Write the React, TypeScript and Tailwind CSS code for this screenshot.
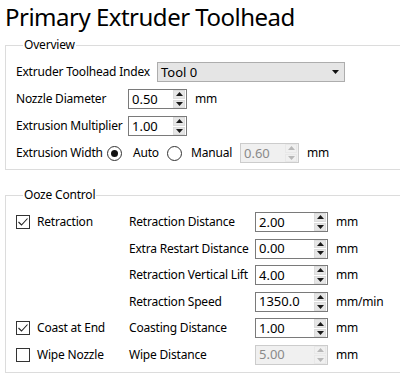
import React from "react";

const font = { fontFamily: '"Noto Sans", "Open Sans", sans-serif' };

function SpinButtons({ disabled }: { disabled?: boolean }) {
  const c = disabled ? "#b8b8b8" : "#1a1a1a";
  return (
    <div className="flex flex-col h-[18px] w-[12px] mr-[1px] gap-[1px]">
      <div className={`flex-1 flex items-center justify-center border ${disabled ? "border-[#e8e8e8] bg-[#f0f0f0]" : "border-[#dcdcdc] bg-[#e6e6e6]"}`}>
        <svg width="7" height="4" viewBox="0 0 7 4"><polygon points="3.5,0 7,4 0,4" fill={c} /></svg>
      </div>
      <div className={`flex-1 flex items-center justify-center border ${disabled ? "border-[#e8e8e8] bg-[#f0f0f0]" : "border-[#dcdcdc] bg-[#e6e6e6]"}`}>
        <svg width="7" height="4" viewBox="0 0 7 4"><polygon points="0,0 7,0 3.5,4" fill={c} /></svg>
      </div>
    </div>
  );
}

function Spin({ value, w, disabled }: { value: string; w: string; disabled?: boolean }) {
  return (
    <div
      className={`${w} h-[20px] flex items-center border ${disabled ? "border-[#cccccc] bg-[#f0f0f0] text-[#8a8a8a]" : "border-[#7a7a7a] bg-white text-black"}`}
    >
      <span className="flex-1 pl-[3px] text-[13px] leading-none tracking-normal">{value}</span>
      <SpinButtons disabled={disabled} />
    </div>
  );
}

function Check({ checked }: { checked?: boolean }) {
  return (
    <div className="w-[14px] h-[14px] border border-[#333333] bg-white flex items-center justify-center">
      {checked && (
        <svg width="12" height="12" viewBox="0 0 12 12">
          <polyline points="1.5,6 4.5,9 10.5,2.5" fill="none" stroke="#222" strokeWidth="1.1" />
        </svg>
      )}
    </div>
  );
}

function Radio({ checked }: { checked?: boolean }) {
  return (
    <div className="w-[15px] h-[15px] rounded-full border border-[#333333] bg-white flex items-center justify-center">
      {checked && <div className="w-[7px] h-[7px] rounded-full bg-[#111]" />}
    </div>
  );
}

function Row({ children }: { children: React.ReactNode }) {
  return <div className="flex items-center h-[20px]">{children}</div>;
}

export default function App() {
  return (
    <div className="w-[400px] h-[391px] bg-white overflow-hidden text-[12px] tracking-[-0.2px] text-black" style={font}>
      <div className="pl-[5px] pt-[2px] h-[37px] text-[24px] leading-[30px] tracking-[-0.5px]">Primary Extruder Toolhead</div>
      <fieldset className="ml-[5px] w-[410px] border border-[#dcdcdc] pl-[10px] pt-[9px] pb-[6px] m-0">
        <legend className="ml-[7px] px-[1px] leading-[16px]">Overview</legend>
        <div className="flex flex-col gap-[7px]">
          <Row>
            <span className="w-[141px]">Extruder Toolhead Index</span>
            <div className="w-[188px] h-[20px] bg-[#e5e5e5] border border-[#adadad] flex items-center pl-[3px] pr-[5px]">
              <span className="flex-1 text-[13px] leading-none tracking-normal">Tool 0</span>
              <svg width="7" height="4" viewBox="0 0 7 4"><polygon points="0,0 7,0 3.5,4" fill="#111" /></svg>
            </div>
          </Row>
          <Row>
            <span className="w-[112px]">Nozzle Diameter</span>
            <Spin value="0.50" w="w-[59px]" />
            <span className="ml-[8px]">mm</span>
          </Row>
          <Row>
            <span className="w-[112px]">Extrusion Multiplier</span>
            <Spin value="1.00" w="w-[59px]" />
          </Row>
          <Row>
            <span className="w-[91px]">Extrusion Width</span>
            <Radio checked />
            <span className="ml-[11px] w-[34px]">Auto</span>
            <Radio />
            <span className="ml-[9px] w-[49px]">Manual</span>
            <Spin value="0.60" w="w-[59px]" disabled />
            <span className="ml-[8px]">mm</span>
          </Row>
        </div>
      </fieldset>
      <fieldset className="ml-[5px] mt-[17px] w-[410px] border border-[#dcdcdc] pl-[10px] pt-[9px] pb-[7px] m-0">
        <legend className="ml-[7px] px-[1px] leading-[16px]">Ooze Control</legend>
        <div className="flex flex-col gap-[6.6px]">
          <Row>
            <div className="w-[113px] flex items-center gap-[7px]"><Check checked /><span>Retraction</span></div>
            <span className="w-[126px]">Retraction Distance</span>
            <Spin value="2.00" w="w-[73px]" />
            <span className="ml-[8px]">mm</span>
          </Row>
          <Row>
            <div className="w-[113px]" />
            <span className="w-[126px]">Extra Restart Distance</span>
            <Spin value="0.00" w="w-[73px]" />
            <span className="ml-[8px]">mm</span>
          </Row>
          <Row>
            <div className="w-[113px]" />
            <span className="w-[126px]">Retraction Vertical Lift</span>
            <Spin value="4.00" w="w-[73px]" />
            <span className="ml-[8px]">mm</span>
          </Row>
          <Row>
            <div className="w-[113px]" />
            <span className="w-[126px]">Retraction Speed</span>
            <Spin value="1350.0" w="w-[73px]" />
            <span className="ml-[8px]">mm/min</span>
          </Row>
          <Row>
            <div className="w-[113px] flex items-center gap-[7px]"><Check checked /><span>Coast at End</span></div>
            <span className="w-[126px]">Coasting Distance</span>
            <Spin value="1.00" w="w-[73px]" />
            <span className="ml-[8px]">mm</span>
          </Row>
          <Row>
            <div className="w-[113px] flex items-center gap-[7px]"><Check /><span>Wipe Nozzle</span></div>
            <span className="w-[126px]">Wipe Distance</span>
            <Spin value="5.00" w="w-[73px]" disabled />
            <span className="ml-[8px]">mm</span>
          </Row>
        </div>
      </fieldset>
    </div>
  );
}
